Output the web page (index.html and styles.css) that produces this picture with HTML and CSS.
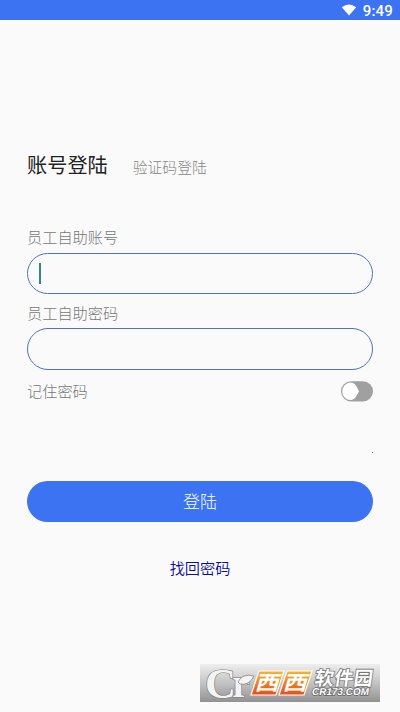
FILE: index.html
```html
<!DOCTYPE html>
<html lang="zh-CN">
<head>
<meta charset="utf-8">
<title>账号登陆</title>
<link rel="stylesheet" href="styles.css">
</head>
<body>
<header class="status">
  <svg class="wifi" width="16" height="12" viewBox="0 0 16 12"><path d="M.8 3.2Q8-2 15.2 3.2L8 11.5Z" fill="#fff"/></svg>
  <span>9:49</span>
</header>
<main class="page">
  <nav class="tabs"><span class="tab active">账号登陆</span><span class="tab">验证码登陆</span></nav>
  <form class="form">
    <div class="label">员工自助账号</div>
    <div class="field"><i class="caret"></i></div>
    <div class="label second">员工自助密码</div>
    <div class="field tall"></div>
    <div class="remember"><span>记住密码</span>
      <svg width="32" height="21" viewBox="0 0 32 21"><rect x="0" y=".2" width="32" height="20.2" rx="10.1" fill="#a0a0a0"/><path d="M9.5 1.6C14 1.6 15.5 5.5 18 10.3C15.5 15 14 19 9.5 19A8.3 8.7 0 0 1 9.5 1.6Z" fill="#fff"/></svg>
    </div>
    <div class="dot"></div>
    <div class="button">登陆</div>
    <a class="find">找回密码</a>
  </form>
</main>
<svg class="mark" width="180" height="38" viewBox="0 0 180 38">
  <defs>
    <linearGradient id="bg" x2="0" y2="1"><stop stop-color="#eee"/><stop offset=".5" stop-color="#c3c3c3"/><stop offset="1" stop-color="#929292"/></linearGradient>
    <linearGradient id="or" x2="0" y2="1"><stop stop-color="#f9b62c"/><stop offset="1" stop-color="#e94c16"/></linearGradient>
  </defs>
  <rect width="180" height="38" fill="url(#bg)"/>
  <text class="logo" x="5" y="34">C<tspan class="small" dx="-4" dy="-1">r</tspan></text>
  <path d="M38 18Q42 9 54 12Q49 22 40 20Z" fill="#f4f4f4" stroke="#777" stroke-width=".7"/>
  <path d="M59 7H84L76 31H51ZM87 7H112L104 31H79Z" fill="url(#or)" stroke="#fff" stroke-width="1.2"/>
  <g class="west" transform="skewX(-16)"><text transform="translate(62 26) scale(1.2 1)">西</text><text transform="translate(90 26) scale(1.2 1)">西</text></g>
  <g class="soft" transform="skewX(-8)"><text x="117" y="21" textLength="58">软件园</text></g>
  <g class="domain" transform="skewX(-10)"><text x="117" y="31" textLength="57" lengthAdjust="spacingAndGlyphs">CR173.COM</text></g>
</svg>
</body>
</html>
```
FILE: styles.css
```css
* { box-sizing: border-box; }
body { margin: 0; height: 712px; overflow: hidden; background: #fafafa; display: flex; flex-direction: column; font-family: "Noto Sans CJK SC", sans-serif; }
.status { height: 20px; flex: none; background: #3b73f3; color: #fff; display: flex; justify-content: flex-end; align-items: center; gap: 6px; padding: 1px 7px 0 0; font: 500 15px/20px Roboto, sans-serif; letter-spacing: .2px; }
.wifi { margin-bottom: 2px; }
.page { padding: 129px 27px 0; height: 644px; flex: none; }
.tabs { display: flex; height: 30px; gap: 25px; align-items: baseline; line-height: 30px; }
.tab { font-size: 14.8px; color: #858585; font-weight: 300; position: relative; top: .5px; }
.active { font-size: 20.2px; color: #222; font-weight: 400; }
.form { display: flex; flex-direction: column; padding-top: 46px; margin: 0; }
.label { height: 28px; line-height: 22px; font-size: 15.2px; font-weight: 300; color: #777; }
.second { height: 27px; margin-top: 7px; }
.field { height: 41px; border: 1px solid #4e73c0; border-radius: 21px; display: flex; align-items: center; padding-left: 11px; }
.tall { height: 42px; }
.caret { width: 2px; height: 21px; background: #33897c; }
.remember { display: flex; justify-content: space-between; align-items: center; height: 22px; margin-top: 10px; font-size: 15.2px; line-height: 20px; font-weight: 300; color: #777; }
.remember span { margin-bottom: 2px; }
.dot { width: 1px; height: 1px; background: #777; margin: 50px 0 28px auto; }
.button { height: 41px; line-height: 40px; border-radius: 21px; background: #3b73f3; color: #fff; font-size: 17px; font-weight: 300; text-align: center; }
.find { margin-top: 33px; line-height: 24px; text-align: center; color: #0c0c9a; font-size: 15.2px; font-weight: 350; }
.mark { margin-left: 200px; flex: none; overflow: visible; }
.logo { font: 43px "Liberation Serif", serif; fill: #f4f4f4; stroke: #777; stroke-width: 1.2px; paint-order: stroke; font-weight: 700; }
.small { font-size: 40px; }
.west { font-size: 20px; font-weight: 700; fill: #fff; }
.soft { font-size: 19px; font-weight: 700; fill: #fff; stroke: #777; stroke-width: 1.6px; paint-order: stroke; }
.domain { font: 700 10px "Liberation Sans", sans-serif; fill: #fff; stroke: #666; stroke-width: 1.5px; paint-order: stroke; }
```
